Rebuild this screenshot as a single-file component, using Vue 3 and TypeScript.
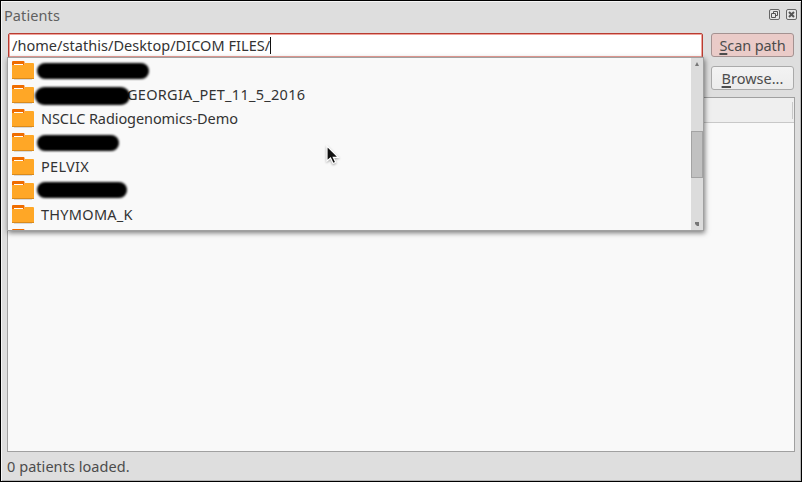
<script setup lang="ts">
interface Entry {
  id: number
  label?: string
  redacted?: string
  tone?: string
}

const path = '/home/stathis/Desktop/DICOM FILES/'

const entries: Entry[] = [
  { id: 1, redacted: 'mask-a' },
  { id: 2, redacted: 'mask-b', label: 'GEORGIA_PET_11_5_2016', tone: 'caps' },
  { id: 3, label: 'NSCLC Radiogenomics-Demo', tone: 'mixed' },
  { id: 4, redacted: 'mask-c' },
  { id: 5, label: 'PELVIX', tone: 'caps' },
  { id: 6, redacted: 'mask-d' },
  { id: 7, label: 'THYMOMA_K', tone: 'caps' },
  { id: 8 },
]
</script>

<template>
  <div class="window">
    <header class="titlebar">
      <span class="title">Patients</span>
      <div class="controls">
        <svg width="11" height="11" viewBox="0 0 11 11">
          <rect x=".5" y=".5" width="10" height="10" rx="1.5" fill="#e6e6e6" stroke="#666" />
          <path d="M4.5 4V2.5h4v4H7M2.5 4.5h4v4h-4z" fill="none" stroke="#555" />
        </svg>
        <svg width="11" height="11" viewBox="0 0 11 11">
          <rect x=".5" y=".5" width="10" height="10" rx="1.5" fill="#e6e6e6" stroke="#666" />
          <path d="M3 3l5 5M8 3l-5 5" fill="none" stroke="#555" stroke-width="2" />
        </svg>
      </div>
    </header>

    <main class="body">
      <div class="row">
        <div class="field"><span class="path">{{ path }}</span><i class="caret"></i></div>
        <button class="btn scan"><span><u>S</u>can path</span></button>
      </div>
      <div class="row second">
        <button class="btn browse"><span><u>B</u>rowse...</span></button>
      </div>
      <div class="table"><div class="thead"></div></div>
    </main>

    <footer class="status"><span>0 patients loaded.</span></footer>

    <div class="popup">
      <ul class="list">
        <li v-for="e in entries" :key="e.id" class="entry">
          <svg class="folder" width="22" height="19" viewBox="0 0 22 19">
            <path d="M2 18.5h18" stroke="#d9d9d9" />
            <path d="M0 1a1 1 0 0 1 1-1h10.500a1 1 0 0 1 1 1v3H0z" fill="#ef6c00" />
            <path d="M0 4h12l1-2h8a1 1 0 0 1 1 1v15H0z" fill="#ffa726" />
            <path d="M2 3h9v1H2z" fill="#fff" />
            <path d="M0 17.500h22" stroke="#d98a1c" />
          </svg>
          <i v-if="e.redacted" class="mask" :class="e.redacted"></i>
          <span v-if="e.label" class="name" :class="[e.tone, { after: e.redacted }]">{{ e.label }}</span>
        </li>
      </ul>
      <div class="scrollbar">
        <svg class="arrow" width="4" height="4" viewBox="0 0 4 4"><path d="M2 0l2 4H0z" fill="#777" /></svg>
        <div class="thumb"></div>
        <svg class="arrow down" width="4" height="4" viewBox="0 0 4 4"><path d="M0 0h4v4H2L0 2z" fill="#777" /></svg>
      </div>
    </div>

    <svg class="cursor" width="15" height="21" viewBox="0 0 15 21">
      <path d="M1 1v15l3.500-3 2.600 5.500 2.600-1.300-2.400-4.900h5z" fill="#111" stroke="#fff" stroke-width="1.200" />
    </svg>
  </div>
</template>

<style>
body {
  margin: 0;
}
</style>

<style scoped>
.window {
  position: relative;
  box-sizing: border-box;
  width: 802px;
  height: 482px;
  display: flex;
  flex-direction: column;
  overflow: hidden;
  border: 1px solid #000;
  background: #dedede;
  box-shadow: inset 1px 1px #f6f6f6, inset -1px -1px #b4b4b4;
  color: #4c4c4c;
  font: 14.5px/24px "Noto Sans", "Open Sans", sans-serif;
  white-space: nowrap;
}

.titlebar {
  flex: none;
  height: 32px;
  box-sizing: border-box;
  padding: 2px 4px 0 3px;
  display: flex;
  justify-content: space-between;
}

.title {
  color: #606060;
  letter-spacing: 0.1px;
}

.controls {
  display: flex;
  gap: 6px;
  padding-top: 6px;
}

.body {
  flex: none;
  padding: 0 6px;
}

.row {
  display: flex;
  gap: 8px;
  padding: 0 1px;
}

.second {
  margin-top: 8px;
  justify-content: flex-end;
}

.field {
  box-sizing: border-box;
  width: 695px;
  height: 25px;
  padding: 0 0 1px 3px;
  display: flex;
  align-items: center;
  border: 1px solid #b83c31;
  border-radius: 2px;
  background: #fff;
  box-shadow: inset 0 0 0 1px #efa39b;
  color: #333;
}

.path {
  line-height: 22px;
  letter-spacing: 0.045px;
}

.caret {
  width: 1px;
  height: 17px;
  background: #111;
}

.btn {
  box-sizing: border-box;
  width: 83px;
  height: 24px;
  padding: 0;
  border: 1px solid #aaa;
  border-radius: 3px;
  background: linear-gradient(#f3f3f3, #ececec);
  color: #4c4c4c;
  font: inherit;
  line-height: 22px;
}

.scan {
  border-color: #a49291;
  background: #eacbc8;
  letter-spacing: -0.1px;
}

.btn u {
  text-decoration-thickness: 2px;
  text-underline-offset: 2px;
}

.table {
  box-sizing: border-box;
  height: 355px;
  margin-top: 7px;
  border: 1px solid #a0a0a0;
  background: #f9f9f9;
}

.thead {
  box-sizing: border-box;
  height: 25px;
  border-bottom: 1px solid #c8c8c8;
  background: linear-gradient(90deg, transparent 784px, #c8c8c8 784px, #c8c8c8 785px, transparent 785px) 0 4px / 100% 17px no-repeat, #efefef;
}

.status {
  flex: none;
  padding: 2px 6px;
  letter-spacing: 0.05px;
}

.popup {
  position: absolute;
  left: 6px;
  top: 56px;
  box-sizing: border-box;
  width: 697px;
  height: 174px;
  display: flex;
  border: 1px solid #a0a0a0;
  background: #f9f9f9;
  box-shadow: 1px 2px 5px rgba(0, 0, 0, 0.5);
  color: #333;
}

.list {
  flex: 1;
  margin: 0;
  padding: 0;
  overflow: hidden;
  list-style: none;
}

.entry {
  position: relative;
  display: flex;
  height: 24px;
  padding-left: 4px;
}

.folder {
  flex: none;
  margin-top: 3px;
}

.name {
  margin-left: 7px;
}

.name.after {
  margin-left: 93px;
}

.caps {
  letter-spacing: 0.28px;
}

.mixed {
  letter-spacing: -0.08px;
}

.mask {
  position: absolute;
  z-index: 1;
  left: 29px;
  top: 5px;
  width: 112px;
  height: 16px;
  border-radius: 8px;
  background: #000;
  filter: blur(0.8px);
}

.mask-b {
  left: 27px;
  width: 95px;
  height: 18px;
  border-radius: 9px;
}

.mask-c {
  width: 82px;
}

.mask-d {
  top: 4px;
  width: 90px;
}

.scrollbar {
  box-sizing: border-box;
  width: 12px;
  display: flex;
  flex-direction: column;
  align-items: center;
  background: #dcdcdc;
  padding: 4px 0;
}

.thumb {
  box-sizing: border-box;
  width: 12px;
  height: 47px;
  margin-top: 65px;
  border: 1px solid #a3a3a3;
  background: #c1c1c1;
}

.down {
  margin-top: auto;
}

.cursor {
  position: absolute;
  left: 325px;
  top: 144px;
  filter: drop-shadow(0 1px 1px rgba(0, 0, 0, 0.35));
}
</style>
